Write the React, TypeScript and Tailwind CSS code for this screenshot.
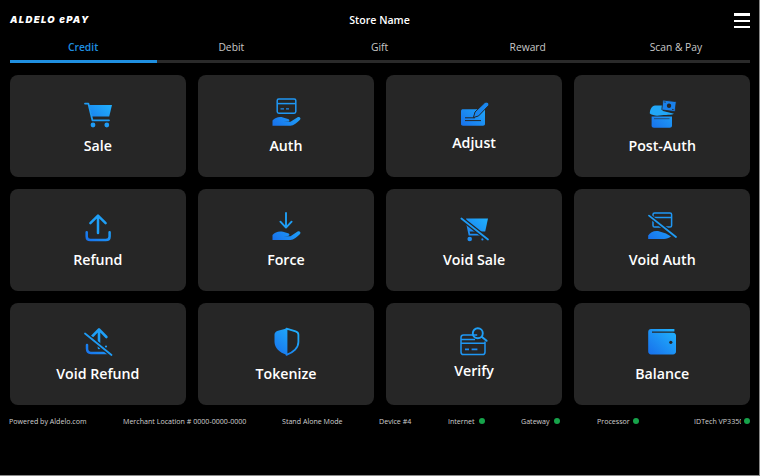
import React from "react";

const Hand = ({ y = 0, id }: { y?: number; id: string }) => (
  <path
    transform={`translate(0 ${y})`}
    fill={`url(#${id})`}
    d="M2.5 21.5C5 18.6 9 17.3 13 18.4L18 19.9C20 20.6 19.8 22.4 18 22.5L13.5 22.8H20.5L27.6 18.2C29.6 17.2 31.4 19.2 30 20.7C27.5 23.4 23.4 26.7 20.5 26.7H2.5Z"
  />
);

const Grad = ({ id }: { id: string }) => (
  <defs>
    <linearGradient id={id} x1="26" y1="4" x2="5" y2="27" gradientUnits="userSpaceOnUse">
      <stop offset="0" stopColor="#20aefc" />
      <stop offset="1" stopColor="#1873ec" />
    </linearGradient>
  </defs>
);

const Svg = ({ id, children }: { id: string; children: React.ReactNode }) => (
  <svg width="32" height="32" viewBox="0 0 32 32" className="block overflow-visible" fill="none">
    <Grad id={id} />
    {children}
  </svg>
);

const BG = "#262626";

const icons: Record<string, React.ReactNode> = {
  Sale: (
    <Svg id="g1">
      <path d="M7 6H30L27.2 17.6H10Z" fill="url(#g1)" />
      <path d="M3 4.6H6.4L10.4 21.3H27" stroke="#1f9bf4" strokeWidth="1.8" strokeLinecap="round" strokeLinejoin="round" />
      <circle cx="11" cy="26" r="2.4" fill="#1f9bf4" />
      <circle cx="24.8" cy="26" r="2.4" fill="#1f9bf4" />
    </Svg>
  ),
  Auth: (
    <Svg id="g2">
      <rect x="7.2" y="0" width="18.6" height="14.2" rx="1.6" stroke="#1f97f4" strokeWidth="1.5" />
      <path d="M7.2 4.6H25.8" stroke="#1f97f4" strokeWidth="1.5" />
      <path d="M10.5 9.8H14M16 9.8H19" stroke="#1f8cf0" strokeWidth="1.3" />
      <Hand id="g2" />
    </Svg>
  ),
  Adjust: (
    <Svg id="g3">
      <path d="M3 12C3 10.9 3.9 10.3 5 10.3H27V25C27 26 26 26.7 25 26.7H5C3.9 26.7 3 26 3 25Z" fill="url(#g3)" />
      <path d="M7 18.8H17M7 21.6H23" stroke={BG} strokeWidth="1" />
      <path d="M15.4 18.6L17 13L26.6 3.8C27.6 2.9 29.3 2.9 30.2 3.9C31.1 4.9 31 6.2 30 7.1L20.6 16.9Z" fill="#1a86ee" stroke={BG} strokeWidth="1" />
    </Svg>
  ),
  "Post-Auth": (
    <Svg id="g4">
      <path d="M5.6 17.4H26V26.4C26 27.7 25 28.7 23.7 28.7H7.9C6.6 28.7 5.6 27.7 5.6 26.4Z" fill="url(#g4)" />
      <rect x="8" y="19.2" width="15.6" height="1" fill={BG} opacity="0.6" />
      <path d="M3.8 14.6C3.8 10 6 6.8 9 6.4H17V12L28 14.8C24 16.6 19 15.4 15.5 16.2C11 17 7 16.8 3.8 14.6Z" fill="#22a7f7" />
      <g transform="rotate(7 23 7)">
        <rect x="16.3" y="1.8" width="13.4" height="10" rx="0.6" fill="#1a80ea" stroke={BG} strokeWidth="0.8" />
        <circle cx="23" cy="6.8" r="2.2" fill={BG} />
        <path d="M17.8 3.6H19.3M26.5 10H28" stroke={BG} strokeWidth="0.9" />
      </g>
    </Svg>
  ),
  Refund: (
    <Svg id="g5">
      <path d="M16 20V3M8.4 10.2L16 2.6L23.6 10.2" stroke="#1f9ff6" strokeWidth="2.5" strokeLinecap="round" strokeLinejoin="round" />
      <path d="M4.7 19.2V23.4C4.7 25.6 6.2 27 8.4 27H23.8C26 27 27.6 25.6 27.6 23.4V19.2" stroke="url(#g5)" strokeWidth="2.5" strokeLinecap="round" />
    </Svg>
  ),
  Force: (
    <Svg id="g6">
      <path d="M16 0V14M10.4 8.7L16 14.6L21.6 8.7" stroke="#1f9ff6" strokeWidth="1.9" strokeLinecap="round" strokeLinejoin="round" />
      <Hand id="g6" y={0.4} />
    </Svg>
  ),
  "Void Sale": (
    <Svg id="g7">
      <path d="M8 5.4H30L27.2 18.4H11Z" fill="url(#g7)" />
      <path d="M9 10L11.4 21.6H26" stroke="#1f8df0" strokeWidth="1.8" />
      <circle cx="11.7" cy="26" r="2.3" fill="#1f8df0" />
      <circle cx="24.4" cy="26.4" r="1.1" fill="#1f8df0" />
      <path d="M3.4 5.5L30 26.5" stroke={BG} strokeWidth="4.2" />
      <path d="M3.4 5.5L30 26.5" stroke="#1f9bf4" strokeWidth="1.8" strokeLinecap="round" />
    </Svg>
  ),
  "Void Auth": (
    <Svg id="g8">
      <rect x="7" y="0" width="18.6" height="14" rx="1.6" stroke="#1f97f4" strokeWidth="1.5" />
      <path d="M7 4.5H25.6" stroke="#1f97f4" strokeWidth="1.5" />
      <path d="M2.2 26V22.4C4 19.2 8 17.4 12 18L20 20.4L25 23.6C23 25 20.5 26 18 26Z" fill="url(#g8)" />
      <path d="M3 2.6L30 24" stroke={BG} strokeWidth="4.2" />
      <path d="M3 2.6L30 24" stroke="#1f9bf4" strokeWidth="1.8" strokeLinecap="round" />
    </Svg>
  ),
  "Void Refund": (
    <Svg id="g9">
      <path d="M17 21V3M9.6 10L17 2.4L24.4 10" stroke="#1f9ff6" strokeWidth="2.6" strokeLinecap="round" strokeLinejoin="round" />
      <path d="M5 18V21.6C5 24 6.4 26 9 26H27" stroke="url(#g9)" strokeWidth="2.5" strokeLinecap="round" />
      <path d="M3 6.5L29.5 28" stroke={BG} strokeWidth="4.2" />
      <path d="M3 6.5L29.5 28" stroke="#1f9bf4" strokeWidth="1.8" strokeLinecap="round" />
      <circle cx="24" cy="19.5" r="1.1" fill="#1f9bf4" />
    </Svg>
  ),
  Tokenize: (
    <Svg id="g10">
      <path d="M16.5 1.6L8 3.8C6 4.4 4.5 5.6 4.5 7.8V15C4.5 20.6 9.4 25.6 16.5 27.8Z" fill="url(#g10)" />
      <path d="M16.5 1.6L25.6 4.3C27 4.7 28.4 5.8 28.4 7.8V15C28.4 20.6 23.6 25.6 16.5 27.8Z" stroke="url(#g10)" strokeWidth="1.8" strokeLinejoin="round" />
    </Svg>
  ),
  Verify: (
    <Svg id="g11">
      <path d="M19.2 8H5.5C4 8 3 9 3 10.5V25C3 26.5 4 27.6 5.5 27.6H24.5C26 27.6 27 26.5 27 25V14.5" stroke="#1f97f4" strokeWidth="1.5" />
      <path d="M3 12.6H17M3 16.3H27" stroke="#1f97f4" strokeWidth="1.5" />
      <path d="M7 22.3H11M13.6 22.3H19.4" stroke="#1f8cf0" strokeWidth="1.8" />
      <circle cx="19.8" cy="6.3" r="5" stroke="#1f9ff6" strokeWidth="1.9" />
      <path d="M24 10L28.6 13.8" stroke="#1f9ff6" strokeWidth="2" strokeLinecap="round" />
    </Svg>
  ),
  Balance: (
    <Svg id="g12">
      <path d="M2.2 5C2.2 3 3.4 1.9 5 1.9H28.4V4.4H6V5.8H27C28.6 5.8 30 7 30 8.6V24.5C30 26.2 28.8 27.4 27 27.4H5C3.4 27.4 2.2 26.2 2.2 24.5Z" fill="url(#g12)" />
      <circle cx="24.8" cy="15.3" r="1.6" fill={BG} />
    </Svg>
  ),
};

const cards: { label: string; mt: string }[] = [
  { label: "Sale", mt: "mt-[5px]" },
  { label: "Auth", mt: "mt-[5px]" },
  { label: "Adjust", mt: "mt-[2px]" },
  { label: "Post-Auth", mt: "mt-[5px]" },
  { label: "Refund", mt: "mt-[5px]" },
  { label: "Force", mt: "mt-[5px]" },
  { label: "Void Sale", mt: "mt-[5px]" },
  { label: "Void Auth", mt: "mt-[5px]" },
  { label: "Void Refund", mt: "mt-[5px]" },
  { label: "Tokenize", mt: "mt-[5px]" },
  { label: "Verify", mt: "mt-[2px]" },
  { label: "Balance", mt: "mt-[5px]" },
];

const tabs = ["Credit", "Debit", "Gift", "Reward", "Scan & Pay"];

const Status = ({ label, w, cls }: { label: string; w: string; cls: string }) => (
  <div className={`flex items-center ${cls}`}>
    <span className={`block overflow-hidden whitespace-nowrap ${w}`}>{label}</span>
    <span className="block h-[6px] w-[6px] rounded-full bg-[#16a34a]" />
  </div>
);

export default function App() {
  return (
    <div className="h-[476px] w-[760px] overflow-hidden border-r border-b border-[#8a8a8a] bg-black font-['Open_Sans',sans-serif] text-white">
      <header className="relative flex h-[41px] items-center justify-center">
        <span className="absolute left-[10px] top-[13px] font-['Inter',sans-serif] text-[9.5px] font-black italic leading-[14px] tracking-[1.3px]">
          ALDELO ePAY
        </span>
        <span className="text-[10.6px] font-semibold">Store Name</span>
        <div className="absolute left-[734px] top-[13px] flex w-[16px] flex-col gap-[3.5px]">
          <span className="h-[3px] bg-white" />
          <span className="h-[2.5px] bg-white" />
          <span className="h-[2.5px] bg-white" />
        </div>
      </header>

      <nav className="ml-[9px] flex w-[741px]">
        {tabs.map((t, i) => (
          <div
            key={t}
            className={`flex h-[19px] flex-1 items-start justify-center text-[10.3px] leading-[13px] ${
              i === 0 ? "font-semibold text-[#1f8fe0]" : "text-[#c8c8c8]"
            }`}
          >
            <span>{t}</span>
          </div>
        ))}
      </nav>
      <div className="ml-[10px] h-[3px] w-[740px] bg-[#2a2a2a]">
        <div className="h-full w-[147px] bg-[#1f8fe0]" />
      </div>

      <main className="ml-[10px] mt-[12px] grid w-[740px] grid-cols-4 gap-x-[12.5px] gap-y-[12px]">
        {cards.map((c) => (
          <div key={c.label} className="flex h-[102px] flex-col items-center rounded-[8px] bg-[#262626] pt-[24px]">
            {icons[c.label]}
            <span className={`${c.mt} text-[14.2px] font-semibold leading-[20px]`}>{c.label}</span>
          </div>
        ))}
      </main>

      <footer className="mt-[10px] flex h-[12px] items-center whitespace-nowrap pl-[9px] text-[7.1px] leading-[12px] text-[#d0d0d0]">
        <span className="block w-[114px]">Powered by Aldelo.com</span>
        <span className="block w-[159px]">Merchant Location # 0000-0000-0000</span>
        <span className="block w-[97px]">Stand Alone Mode</span>
        <span className="block w-[69px]">Device #4</span>
        <Status label="Internet" w="w-[31px]" cls="w-[73px]" />
        <Status label="Gateway" w="w-[33px]" cls="w-[76px]" />
        <Status label="Processor" w="w-[36px]" cls="w-[97px]" />
        <Status label="IDTech VP3350" w="w-[47px] mr-[3px]" cls="" />
      </footer>
    </div>
  );
}
